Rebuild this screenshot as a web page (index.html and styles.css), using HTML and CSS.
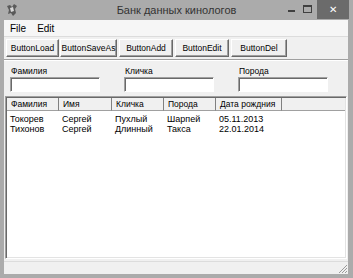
FILE: index.html
```html
<!DOCTYPE html>
<html lang="ru">
<head>
    <meta charset="UTF-8">
    <title>Банк данных кинологов</title>
    <link rel="stylesheet" href="styles.css">
</head>
<body>
    <div class="window">
        <div class="titlebar">
            <div class="app-icon">
                <svg width="14" height="14" viewBox="0 0 14 14">
                    <path d="M2 3 L5 2 L7 4 L9 1 L12 3 L10 6 L11 10 L8 13 L6 10 L3 11 L4 7 Z" fill="#5a5a5a"/>
                    <path d="M5 5 L8 4 L9 8 L6 9 Z" fill="#d8d8d8"/>
                </svg>
            </div>
            <div class="title">Банк данных кинологов</div>
            <div class="controls">
                <span class="ctl-min"></span>
                <span class="ctl-max"></span>
                <span class="ctl-close">✕</span>
            </div>
        </div>
        <div class="client">
            <div class="menubar">
                <span>File</span>
                <span>Edit</span>
            </div>
            <div class="toolbar">
                <button class="btn w52">ButtonLoad</button>
                <button class="btn w57">ButtonSaveAs</button>
                <button class="btn w54">ButtonAdd</button>
                <button class="btn w54">ButtonEdit</button>
                <button class="btn w56">ButtonDel</button>
            </div>
            <div class="fields">
                <div class="field">
                    <label>Фамилия</label>
                    <div class="input"></div>
                </div>
                <div class="field">
                    <label>Кличка</label>
                    <div class="input"></div>
                </div>
                <div class="field">
                    <label>Порода</label>
                    <div class="input"></div>
                </div>
            </div>
            <div class="list">
                <div class="list-head">
                    <div class="col c1">Фамилия</div>
                    <div class="col c2">Имя</div>
                    <div class="col c3">Кличка</div>
                    <div class="col c4">Порода</div>
                    <div class="col c5">Дата рождния</div>
                    <div class="col rest"></div>
                </div>
                <div class="rows">
                    <div class="row">
                        <div class="col c1">Токорев</div>
                        <div class="col c2">Сергей</div>
                        <div class="col c3">Пухлый</div>
                        <div class="col c4">Шарпей</div>
                        <div class="col c5">05.11.2013</div>
                    </div>
                    <div class="row">
                        <div class="col c1">Тихонов</div>
                        <div class="col c2">Сергей</div>
                        <div class="col c3">Длинный</div>
                        <div class="col c4">Такса</div>
                        <div class="col c5">22.01.2014</div>
                    </div>
                </div>
            </div>
            <div class="statusbar">
                <svg class="grip" width="11" height="11" viewBox="0 0 11 11">
                    <path d="M10 2 L2 10 M10 5 L5 10 M10 8 L8 10" stroke="#9a9a9a" stroke-width="1"/>
                </svg>
            </div>
        </div>
    </div>
</body>
</html>
```

FILE: styles.css
```css
body {
    margin: 0;
    padding: 0;
    background: #ababab;
    font-family: 'Liberation Sans', Arial, sans-serif;
    font-size: 10px;
    color: #000;
}

.window {
    width: 353px;
    height: 278px;
    box-sizing: border-box;
    background: #ababab;
    padding: 0 5px 4px 4px;
    display: flex;
    flex-direction: column;
}

.titlebar {
    height: 20px;
    display: flex;
    align-items: center;
}

.app-icon {
    width: 14px;
    height: 14px;
    margin-left: 1px;
}

.title {
    flex: 1;
    text-align: center;
    font-family: 'Liberation Sans', Arial, sans-serif;
    font-size: 11px;
    color: #333;
    padding-left: 46px;
}

.controls {
    display: flex;
    align-items: flex-start;
    align-self: flex-start;
    height: 20px;
    margin-right: -1px;
}

.ctl-min {
    width: 7px;
    height: 2px;
    background: #404040;
    margin: 10px 8px 0 0;
}

.ctl-max {
    width: 7px;
    height: 5px;
    border: 1px solid #404040;
    border-top-width: 2px;
    margin: 5px 5px 0 0;
}

.ctl-close {
    width: 32px;
    height: 19px;
    background: #6b6b6b;
    color: #fff;
    font-size: 10px;
    line-height: 19px;
    text-align: center;
}

.client {
    flex: 1;
    background: #f0f0f0;
    display: flex;
    flex-direction: column;
}

.menubar {
    height: 16px;
    background: #f6f6f6;
    display: flex;
    align-items: center;
    gap: 11px;
    padding-left: 6px;
    font-size: 10px;
}

.toolbar {
    display: flex;
    gap: 1px;
    padding: 2px 0 2px 2px;
    border-top: 1px solid #dcdcdc;
    border-bottom: 1px solid #a0a0a0;
}

.btn {
    height: 18px;
    padding: 0;
    font-family: 'Liberation Sans', Arial, sans-serif;
    font-size: 8.5px;
    background: #f0f0f0;
    border: 1px solid;
    border-color: #fff #696969 #696969 #fff;
    box-shadow: inset -1px -1px 0 #a0a0a0;
    color: #000;
}

.w52 { width: 53px; }
.w54 { width: 54px; margin-left: 1px; }
.w56 { width: 56px; margin-left: 1px; }
.w57 { width: 57px; }

.fields {
    display: flex;
    gap: 24px;
    padding: 4px 0 4px 6px;
    border-top: 1px solid #fff;
}

.field {
    display: flex;
    flex-direction: column;
}

.field label {
    font-size: 8.5px;
    line-height: 12px;
    padding-left: 1px;
}

.input {
    width: 88px;
    height: 13px;
    background: #fff;
    border: 1px solid;
    border-color: #a0a0a0 #fff #fff #a0a0a0;
    box-shadow: inset 1px 1px 0 #696969;
}

.list {
    flex: 1;
    margin: 0 1px 2px 1px;
    background: #fff;
    border: 1px solid;
    border-color: #a0a0a0 #fff #fff #a0a0a0;
    box-shadow: inset 1px 1px 0 #696969, inset -1px -1px 0 #e3e3e3;
    padding: 1px 1px 0 1px;
}

.list-head {
    display: flex;
    height: 13px;
    background: #f0f0f0;
}

.list-head .col {
    height: 13px;
    line-height: 13px;
    font-size: 8.5px;
    border-right: 1px solid #808080;
    border-bottom: 1px solid #a0a0a0;
    padding-left: 4px;
}

.list-head .rest {
    flex: 1;
    border-right: none;
}

.rows {
    padding-top: 3px;
}

.row {
    display: flex;
    height: 10px;
    line-height: 10px;
}

.row .col {
    padding-left: 3px;
}

.col {
    box-sizing: border-box;
    font-size: 9px;
    white-space: nowrap;
}

.c1 { width: 52px; }
.c2 { width: 53px; }
.c3 { width: 52px; }
.c4 { width: 52px; }
.c5 { width: 66px; }

.statusbar {
    height: 12px;
    border-top: 1px solid #dcdcdc;
    display: flex;
    justify-content: flex-end;
    align-items: flex-end;
}

.grip {
    display: block;
}
```
